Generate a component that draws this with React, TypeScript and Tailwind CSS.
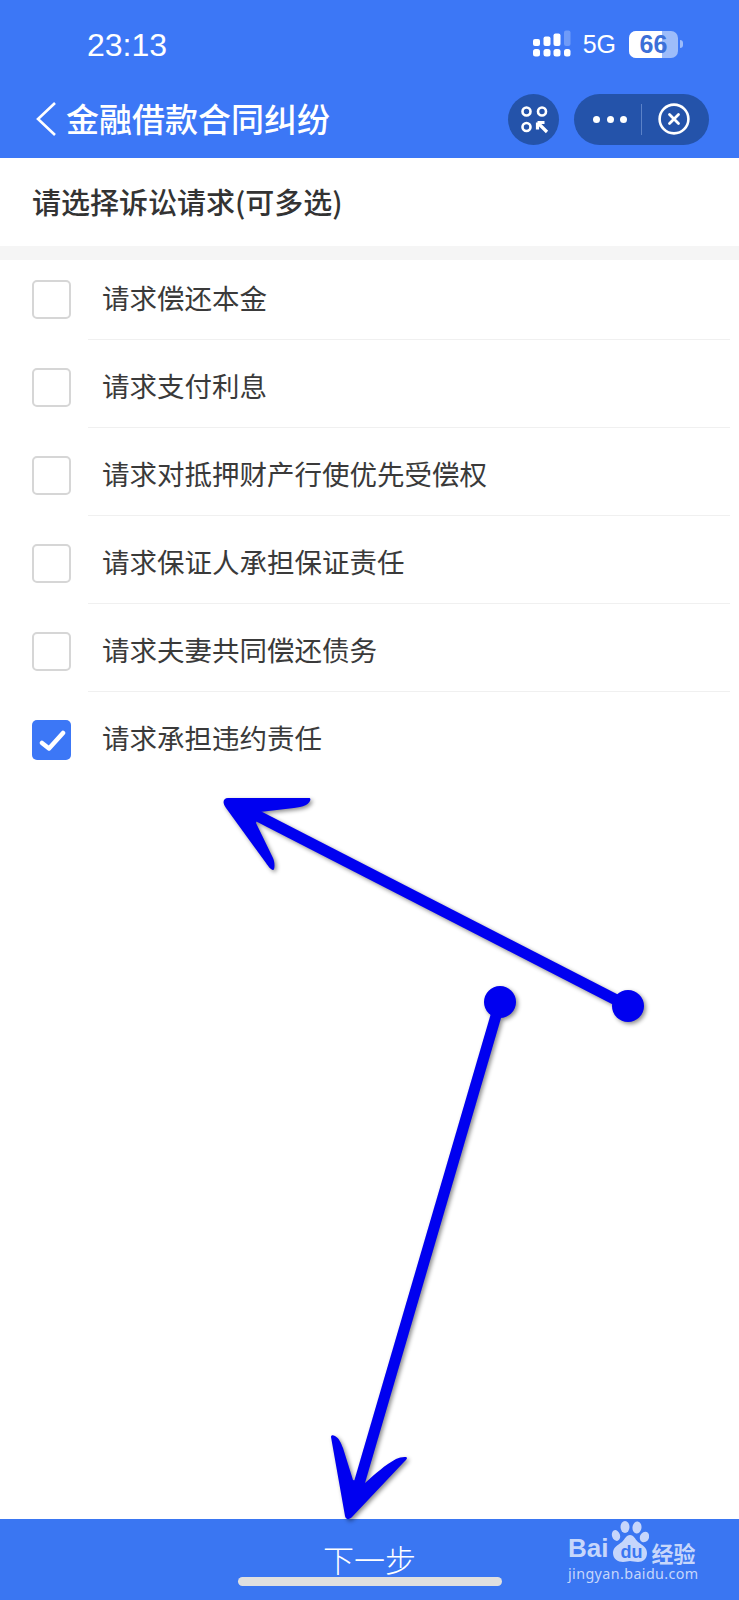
const items = [
  { label: "请求偿还本金", checked: false },
  { label: "请求支付利息", checked: false },
  { label: "请求对抵押财产行使优先受偿权", checked: false },
  { label: "请求保证人承担保证责任", checked: false },
  { label: "请求夫妻共同偿还债务", checked: false },
  { label: "请求承担违约责任", checked: true },
];

function SignalIcon() {
  return (
    <svg width="40" height="28" viewBox="0 0 40 28" fill="#fff">
      <rect x="1" y="9" width="7" height="7" rx="2" />
      <rect x="11.5" y="6.5" width="7" height="9.5" rx="2" />
      <rect x="21.5" y="3.5" width="7" height="12.5" rx="2" />
      <rect x="32" y="0.5" width="6.5" height="15.5" rx="2" fill="#6f9bf8" />
      <rect x="1" y="19" width="7" height="7.5" rx="2.5" />
      <rect x="11.5" y="19" width="7" height="7.5" rx="2.5" />
      <rect x="21.5" y="19" width="7" height="7.5" rx="2.5" />
      <rect x="32" y="19" width="6.5" height="7.5" rx="2.5" />
    </svg>
  );
}

function ScanIcon() {
  return (
    <svg width="32" height="32" viewBox="0 0 32 32" fill="none" stroke="#fff" strokeWidth="2.6">
      <circle cx="8.5" cy="8.5" r="4" />
      <circle cx="24" cy="8.5" r="4" />
      <circle cx="8.5" cy="24" r="4" />
      <path d="M19.5 19.5h7M19.5 19.500v7M20 20l9 9" strokeWidth="3.2" />
    </svg>
  );
}

function CloseIcon() {
  return (
    <svg width="34" height="34" viewBox="0 0 34 34" fill="none" stroke="#fff">
      <circle cx="17" cy="17" r="14.4" strokeWidth="2.6" />
      <path d="M12.5 12.5l9 9M21.5 12.5l-9 9" strokeWidth="2.8" strokeLinecap="round" />
    </svg>
  );
}

function BaiduPaw() {
  return (
    <svg width="38" height="41" viewBox="0 0 38 41" fill="#c6d6fb">
      <ellipse cx="5" cy="14.500" rx="4" ry="5.500" transform="rotate(-18 5 14.500)" />
      <ellipse cx="14" cy="6" rx="4.500" ry="6" />
      <ellipse cx="26" cy="6.500" rx="4.500" ry="6" transform="rotate(8 26 6.500)" />
      <ellipse cx="33.500" cy="16" rx="4.500" ry="5.500" transform="rotate(25 33.500 16)" />
      <path d="M19 14c-4 0-5 4-8 7-4 3-9 5-9 11 0 6 5 9 10 9 3 0 5-1 7-1s5 1 8 1c5 0 9-3 9-9 0-6-5-8-9-11-3-3-4-7-8-7z" />
    </svg>
  );
}

function Annotations() {
  return (
    <svg
      className="absolute left-0 top-0 drop-shadow-[2px_2px_2px_rgba(0,0,0,0.45)]"
      width="739"
      height="1600"
      viewBox="0 0 739 1600"
      fill="#0000f0"
    >
      <path d="M628 1006L252 813" stroke="#0000f0" strokeWidth="11" />
      <circle cx="628" cy="1006" r="16" />
      <path d="M228 798L309 798C312 798 310 803 306 805C302 807 298 807 294 808L260 812L256 823L273 858C275 862 275 870 273 870C271 870 268 866 266 863L226 808C222 803 223 798 228 798Z" />
      <path d="M500 1002L359 1484" stroke="#0000f0" strokeWidth="11" />
      <circle cx="500" cy="1002" r="16" />
      <path d="M331 1437C331 1435 333 1435 335 1436C339 1438 341 1443 343 1448L353 1480L365 1483C375 1474 385 1465 396 1459C400 1457 407 1456 407 1458C407 1459 405 1461 403 1463L352 1517C349 1520 346 1520 345 1516Z" />
    </svg>
  );
}

export default function App() {
  return (
    <div
      className="relative flex h-[1600px] flex-col overflow-hidden bg-white"
      style={{ fontFamily: '"Noto Sans CJK SC", "Noto Sans", sans-serif' }}
    >
      <header className="h-[158px] shrink-0 bg-[#3c77f6] text-white">
        <div className="flex h-[94px] items-start pl-[87px] pr-[56px] pt-[30px]">
          <span className="mt-[1px] font-['Liberation_Sans',sans-serif] text-[32px] leading-[28px]">23:13</span>
          <div className="ml-auto flex items-center">
            <SignalIcon />
            <span className="ml-[11px] font-['Liberation_Sans',sans-serif] text-[25px] leading-[28px]">5G</span>
            <div className="relative ml-[13px] flex h-[27px] w-[49px] items-center justify-center rounded-[7px] bg-[#9dbcfa]">
              <div className="absolute inset-y-0 left-0 w-[33px] rounded-l-[7px] bg-white" />
              <span className="relative font-['Liberation_Sans',sans-serif] text-[25px] font-bold leading-[27px] text-[#3c70d8]">66</span>
            </div>
            <div className="ml-[2px] h-[8px] w-[3px] rounded-r-sm bg-[#9dbcfa]" />
          </div>
        </div>
        <div className="flex h-[50px] items-center pl-[35px] pr-[30px]">
          <svg width="22" height="36" viewBox="0 0 22 36" fill="none" stroke="#fff" strokeWidth="2.6">
            <path d="M20 2L3 18l17 16" />
          </svg>
          <h1 className="ml-[9px] -translate-y-px text-[33px] font-medium leading-[50px]">金融借款合同纠纷</h1>
          <div className="ml-auto flex items-center gap-[15px]">
            <div className="flex h-[51px] w-[51px] items-center justify-center rounded-full bg-[#2453aa]">
              <ScanIcon />
            </div>
            <div className="flex h-[51px] w-[135px] items-center rounded-full bg-[#2453aa]">
              <div className="flex w-[67px] items-center justify-end gap-[6.500px] pr-[14px]">
                <span className="h-[7px] w-[7px] rounded-full bg-white" />
                <span className="h-[7px] w-[7px] rounded-full bg-white" />
                <span className="h-[7px] w-[7px] rounded-full bg-white" />
              </div>
              <div className="h-[31px] w-px bg-[#5b82c8]" />
              <div className="flex flex-1 items-center justify-center pr-[4px]">
                <CloseIcon />
              </div>
            </div>
          </div>
        </div>
      </header>

      <div className="flex h-[102px] shrink-0 items-center border-b-[14px] border-[#f5f5f5] pl-[32px] text-[29px] font-medium text-[#333]">
        请选择诉讼请求(可多选)
      </div>

      <ul className="flex-1">
        {items.map((item, i) => (
          <li key={item.label} className={`flex pl-[32px] ${i === 0 ? "pt-[20px]" : "pt-[28px]"}`}>
            {item.checked ? (
              <div className="flex h-[40px] w-[39px] shrink-0 items-center justify-center rounded-[5px] bg-[#3c77f6]">
                <svg width="28" height="24" viewBox="0 0 28 24" fill="none" stroke="#fff" strokeWidth="4.5" strokeLinecap="round" strokeLinejoin="round">
                  <path d="M4 15l7 5.500L25 5" />
                </svg>
              </div>
            ) : (
              <div className="h-[39px] w-[39px] shrink-0 rounded-[5px] border-2 border-[#d6d6d6] bg-white" />
            )}
            <div className={`ml-[17px] flex-1 pb-[24px] pl-[14px] ${i < items.length - 1 ? "mr-[9px] border-b border-[#f0f0f0]" : ""}`}>
              <span className="block text-[27.500px] leading-[35px] text-[#3a3a3a]">{item.label}</span>
            </div>
          </li>
        ))}
      </ul>

      <div className="flex h-[81px] shrink-0 justify-center bg-[#3a76f2] pt-[22px]">
        <span className="text-[31px] font-light leading-[36px] text-white">下一步</span>
      </div>

      <div className="absolute left-[238px] top-[1577px] h-[9px] w-[264px] rounded-full bg-[#e0e0e0]" />

      <Annotations />

      <div className="absolute left-[568px] top-[1520px] w-[135px] text-[#c6d6fb]">
        <div className="flex h-[44px] items-end">
          <span className="font-['Liberation_Sans',sans-serif] text-[26px] font-bold leading-[32px]">Bai</span>
          <div className="relative mb-[2px] ml-[3px] h-[41px] w-[38px]">
            <BaiduPaw />
            <span className="absolute bottom-[1px] left-[9px] font-['Liberation_Sans',sans-serif] text-[18px] font-bold leading-[18px] text-[#3a76f2]">du</span>
          </div>
          <span className="ml-[2px] text-[22px] font-bold leading-[24px]">经验</span>
        </div>
        <div className="whitespace-nowrap font-['Noto_Sans',sans-serif] text-[14.300px] leading-[20px] tracking-[0.4px]">jingyan.baidu.com</div>
      </div>
    </div>
  );
}
